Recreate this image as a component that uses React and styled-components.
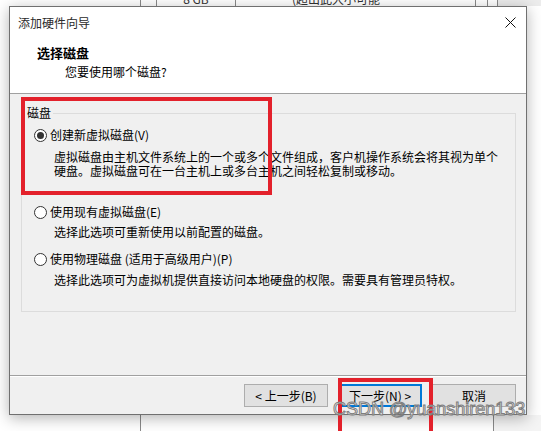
import React from "react";
import styled, { createGlobalStyle } from "styled-components";

const GlobalStyle = createGlobalStyle`
  body {
    margin: 0;
    background: #ffffff;
    font-family: "Noto Sans CJK SC", "Noto Sans", sans-serif;
  }
`;

const Desktop = styled.div`
  position: relative;
  width: 541px;
  height: 431px;
  overflow: hidden;
  background: #ffffff;
  display: flex;
  flex-direction: column;
  justify-content: space-between;
`;

const Strip = styled.div`
  display: flex;
  height: ${(p) => p.$h}px;
  overflow: hidden;
`;

const Cell = styled.div`
  flex: 0 0 ${(p) => p.$w}px;
  border-right: ${(p) => (p.$line ? "1px solid #8a8a8a" : "none")};
  background: ${(p) => p.$bg || "transparent"};
  box-sizing: border-box;
  font-size: 12px;
  line-height: 12px;
  color: #333;
  padding-left: ${(p) => p.$pl || 0}px;
  text-align: ${(p) => p.$align || "left"};
  white-space: nowrap;

  span {
    display: block;
    margin-top: -7px;
  }
`;

const Dialog = styled.div`
  position: absolute;
  left: 9px;
  top: 6px;
  width: 518px;
  height: 409px;
  box-sizing: border-box;
  border: 1px solid #707070;
  background: #f0f0f0;
  box-shadow: 0 3px 14px rgba(0, 0, 0, 0.3);
  display: flex;
  flex-direction: column;
  color: #000;
  font-size: 12px;
`;

const TitleBar = styled.div`
  height: 31px;
  flex: 0 0 31px;
  background: #ffffff;
  display: flex;
  align-items: center;
  justify-content: space-between;
  padding: 0 10px 0 8px;
  color: #2a2a2a;
  font-size: 12px;
`;

const Header = styled.div`
  flex: 0 0 56px;
  box-sizing: border-box;
  background: #ffffff;
  border-bottom: 1px solid #a0a0a0;
  padding: 7px 0 0 27px;
`;

const HeaderTitle = styled.div`
  font-weight: 700;
  font-size: 13px;
  line-height: 16px;
`;

const HeaderSub = styled.div`
  font-size: 12px;
  line-height: 16px;
  margin: 3px 0 0 28px;
`;

const Body = styled.div`
  flex: 1;
  padding: 11px 10px 0 11px;
`;

const Group = styled.fieldset`
  margin: 0;
  border: 1px solid #dcdcdc;
  padding: 0 10px 24px 3px;
  min-width: 0;
`;

const Legend = styled.legend`
  padding: 0 2px;
  font-size: 12px;
  line-height: 16px;
`;

const Options = styled.div`
  margin-left: 9px;
  display: flex;
  flex-direction: column;
`;

const RadioRow = styled.div`
  display: flex;
  align-items: center;
  gap: 3px;
  height: 16px;
  margin-top: ${(p) => p.$mt}px;
  font-size: 12px;
  line-height: 16px;
  white-space: nowrap;
`;

const Radio = styled.span`
  width: 13px;
  height: 13px;
  box-sizing: border-box;
  border-radius: 50%;
  border: 1px solid #333333;
  background: #ffffff;
  display: flex;
  align-items: center;
  justify-content: center;

  &::after {
    content: "";
    display: ${(p) => (p.$checked ? "block" : "none")};
    width: 7px;
    height: 7px;
    border-radius: 50%;
    background: #333333;
  }
`;

const Desc = styled.div`
  margin: ${(p) => p.$mt}px 0 0 20px;
  font-size: 12px;
  line-height: 14px;
  white-space: nowrap;
`;

const Footer = styled.div`
  flex: 0 0 39px;
  box-sizing: border-box;
  border-top: 1px solid #a0a0a0;
  box-shadow: inset 0 1px 0 #ffffff;
  display: flex;
  justify-content: flex-end;
  gap: 10px;
  padding: 8px 10px 0 0;
`;

const Button = styled.button`
  width: 84px;
  height: 23px;
  box-sizing: border-box;
  background: #e1e1e1;
  border: 1px solid ${(p) => (p.$default ? "#0078d7" : "#adadad")};
  box-shadow: ${(p) => (p.$default ? "inset 0 0 0 1px #0078d7" : "none")};
  font-family: "Noto Sans CJK SC", sans-serif;
  font-size: 12px;
  color: #000;
  padding: 0;
`;

const Mark = styled.div`
  position: absolute;
  left: ${(p) => p.$x}px;
  top: ${(p) => p.$y}px;
  width: ${(p) => p.$w}px;
  height: ${(p) => p.$h}px;
  box-sizing: border-box;
  border: 4px solid #e3212b;
  pointer-events: none;
`;

const Watermark = styled.div`
  position: absolute;
  left: 333px;
  top: 399px;
  font-family: "Liberation Sans", Arial, sans-serif;
  font-size: 18px;
  line-height: 20px;
  color: rgba(255, 255, 255, 0.8);
  -webkit-text-stroke: 1px #7e7e7e;
  white-space: nowrap;
`;

const CloseIcon = () => (
  <svg width="11" height="11" viewBox="0 0 11 11">
    <path d="M0.5 0.5 L10.5 10.5 M10.5 0.5 L0.5 10.5" stroke="#111" strokeWidth="1" />
  </svg>
);

export default function App() {
  return (
    <>
      <GlobalStyle />
      <Desktop>
        <Strip $h={6}>
          <Cell $w={141} $line />
          <Cell $w={16} $line />
          <Cell $w={79} $line $align="center">
            <span>8 GB</span>
          </Cell>
          <Cell $w={240} $line $pl={56}>
            <span>(超出此大小可能</span>
          </Cell>
          <Cell $w={12} $line />
          <Cell $w={10} $line />
          <Cell $w={43} $bg="#ececec" />
        </Strip>
        <Strip $h={16}>
          <Cell $w={141} $line />
          <Cell $w={353} $line />
          <Cell $w={47} $bg="#f4f4f4" />
        </Strip>

        <Dialog>
          <TitleBar>
            <span>添加硬件向导</span>
            <CloseIcon />
          </TitleBar>
          <Header>
            <HeaderTitle>选择磁盘</HeaderTitle>
            <HeaderSub>您要使用哪个磁盘?</HeaderSub>
          </Header>
          <Body>
            <Group>
              <Legend>磁盘</Legend>
              <Options>
                <RadioRow $mt={6}>
                  <Radio $checked />
                  创建新虚拟磁盘(V)
                </RadioRow>
                <Desc $mt={7}>
                  虚拟磁盘由主机文件系统上的一个或多个文件组成，客户机操作系统会将其视为单个
                  <br />
                  硬盘。虚拟磁盘可在一台主机上或多台主机之间轻松复制或移动。
                </Desc>
                <RadioRow $mt={26}>
                  <Radio />
                  使用现有虚拟磁盘(E)
                </RadioRow>
                <Desc $mt={5}>选择此选项可重新使用以前配置的磁盘。</Desc>
                <RadioRow $mt={12}>
                  <Radio />
                  使用物理磁盘 (适用于高级用户)(P)
                </RadioRow>
                <Desc $mt={6}>
                  选择此选项可为虚拟机提供直接访问本地硬盘的权限。需要具有管理员特权。
                </Desc>
              </Options>
            </Group>
          </Body>
          <Footer>
            <Button>&lt; 上一步(B)</Button>
            <Button $default>下一步(N) &gt;</Button>
            <Button>取消</Button>
          </Footer>
        </Dialog>

        <Mark $x={21} $y={97} $w={251} $h={98} />
        <Mark $x={338} $y={378} $w={95} $h={70} />
        <Watermark>CSDN @yuanshiren133</Watermark>
      </Desktop>
    </>
  );
}
